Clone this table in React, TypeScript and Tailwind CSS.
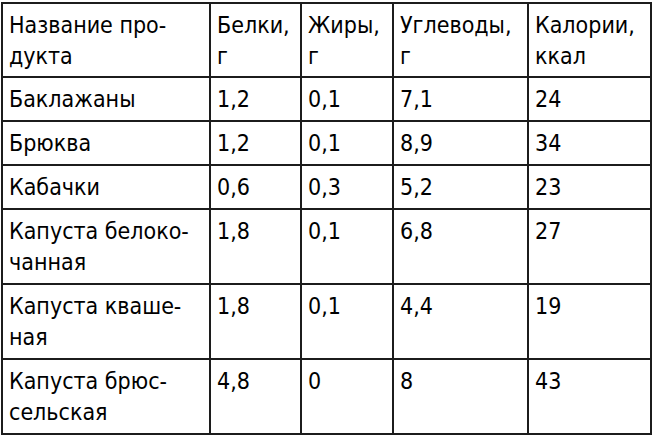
import React from "react"

type Row = { name: React.ReactNode; protein: string; fat: string; carbs: string; kcal: string }

const rows: Row[] = [
  { name: "Баклажаны", protein: "1,2", fat: "0,1", carbs: "7,1", kcal: "24" },
  { name: "Брюква", protein: "1,2", fat: "0,1", carbs: "8,9", kcal: "34" },
  { name: "Кабачки", protein: "0,6", fat: "0,3", carbs: "5,2", kcal: "23" },
  { name: <>Капуста белоко-<br />чанная</>, protein: "1,8", fat: "0,1", carbs: "6,8", kcal: "27" },
  { name: <>Капуста кваше-<br />ная</>, protein: "1,8", fat: "0,1", carbs: "4,4", kcal: "19" },
  { name: <>Капуста брюс-<br />сельская</>, protein: "4,8", fat: "0", carbs: "8", kcal: "43" },
]

const cell = "border-r-2 border-b-2 border-[#1c1c1c] pl-[6px] pr-1 pt-[6px] pb-[5px] align-top"
const head = "border-r-2 border-b-2 border-[#1c1c1c] pl-[6px] pr-1 pt-[6px] pb-[4px] align-top text-left font-normal"

export default function App() {
  return (
    <div className="bg-white min-h-[437px] pt-[2px] pl-[1px] text-black text-[23px] leading-[31px] font-['DejaVu_Sans_Condensed','DejaVu_Sans',sans-serif] [font-stretch:condensed]">
      <table className="table-fixed border-separate border-spacing-0 border-l-2 border-t-2 border-[#1c1c1c] w-[651px]">
        <colgroup>
          <col className="w-[208px]" />
          <col className="w-[91px]" />
          <col className="w-[92px]" />
          <col className="w-[135px]" />
          <col className="w-[123px]" />
        </colgroup>
        <thead>
          <tr>
            <th className={head}>Название про-<br />дукта</th>
            <th className={head}>Белки,<br />г</th>
            <th className={head}>Жиры,<br />г</th>
            <th className={head}>Углеводы,<br />г</th>
            <th className={head}>Калории,<br />ккал</th>
          </tr>
        </thead>
        <tbody>
          {rows.map((r, i) => (
            <tr key={i}>
              <td className={cell}>{r.name}</td>
              <td className={cell}>{r.protein}</td>
              <td className={cell}>{r.fat}</td>
              <td className={cell}>{r.carbs}</td>
              <td className={cell}>{r.kcal}</td>
            </tr>
          ))}
        </tbody>
      </table>
    </div>
  )
}
